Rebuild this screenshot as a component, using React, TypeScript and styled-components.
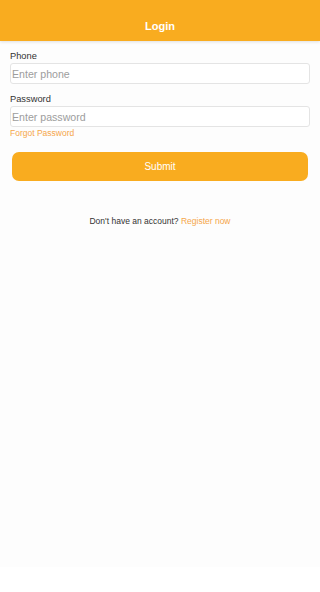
import styled, { createGlobalStyle } from 'styled-components';

const GlobalStyle = createGlobalStyle`
  html, body {
    margin: 0;
    padding: 0;
    background: #ffffff;
    font-family: "Liberation Sans", Arial, sans-serif;
  }
`;

const Page = styled.div`
  min-height: 567px;
  background: #fdfdfd;
  display: flex;
  flex-direction: column;
`;

const Header = styled.header`
  height: 41px;
  box-sizing: border-box;
  padding-top: 20px;
  background: #f9ac1f;
  box-shadow: 0 1px 3px rgba(0, 0, 0, 0.12);
  text-align: center;
  color: #ffffff;
  font-size: 11px;
  font-weight: 700;
`;

const Form = styled.form`
  display: flex;
  flex-direction: column;
  padding: 9px 10px 0 10px;
`;

const Field = styled.div`
  display: flex;
  flex-direction: column;
  gap: 1px;
  margin-bottom: 9px;
`;

const Label = styled.label`
  font-size: 9.3px;
  color: #333333;
  line-height: 12px;
`;

const Input = styled.input`
  box-sizing: border-box;
  height: 21px;
  width: 100%;
  border: 1px solid #e4e4e4;
  border-radius: 3px;
  background: #ffffff;
  padding: 0 1px;
  font-family: "Liberation Sans", Arial, sans-serif;
  font-size: 10.6px;
  color: #333333;
  outline: none;

  &::placeholder {
    color: #9d9d9d;
  }
`;

const ForgotLink = styled.a`
  margin-top: -8px;
  line-height: 10px;
  font-size: 8.5px;
  color: #f5a64a;
  text-decoration: none;
`;

const SubmitButton = styled.button`
  margin: 14px 2px 0 2px;
  height: 29px;
  border: none;
  border-radius: 7px;
  background: #f9ac1f;
  color: #ffffff;
  font-family: "Liberation Sans", Arial, sans-serif;
  font-size: 10px;
  font-weight: 500;
`;

const Footer = styled.p`
  margin: 35px 0 0 0;
  line-height: 10px;
  text-align: center;
  font-size: 8.5px;
  color: #333333;
`;

const RegisterLink = styled.a`
  color: #f5a64a;
  text-decoration: none;
`;

export default function App() {
  return (
    <>
      <GlobalStyle />
      <Page>
        <Header>Login</Header>
        <Form onSubmit={(e) => e.preventDefault()}>
          <Field>
            <Label>Phone</Label>
            <Input placeholder="Enter phone" />
          </Field>
          <Field>
            <Label>Password</Label>
            <Input type="password" placeholder="Enter password" />
          </Field>
          <ForgotLink href="#">Forgot Password</ForgotLink>
          <SubmitButton type="submit">Submit</SubmitButton>
        </Form>
        <Footer>
          Don't have an account? <RegisterLink href="#">Register now</RegisterLink>
        </Footer>
      </Page>
    </>
  );
}
